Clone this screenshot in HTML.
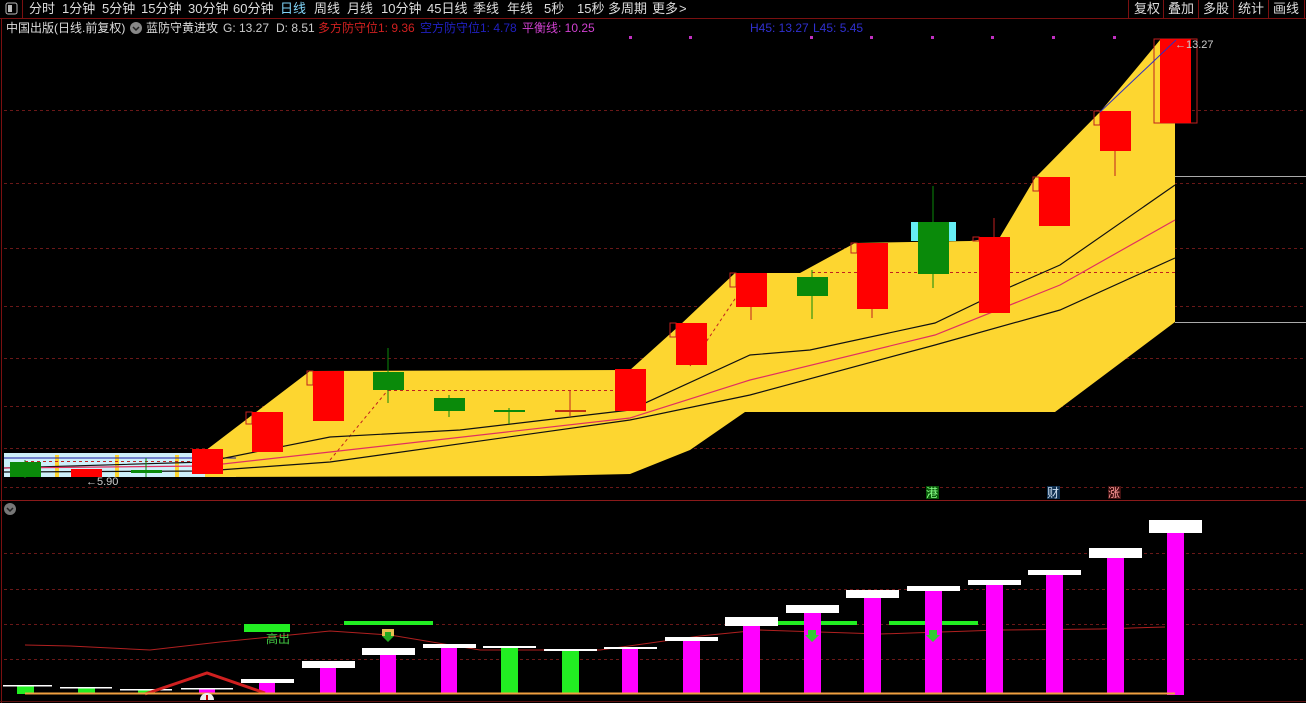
<!DOCTYPE html>
<html><head><meta charset="utf-8"><style>
html,body{margin:0;padding:0;background:#000;width:1306px;height:703px;overflow:hidden}
svg{display:block}
text{font-family:"Liberation Sans","Noto Sans CJK SC",sans-serif}
</style></head><body>
<svg width="1306" height="703" viewBox="0 0 1306 703" xmlns="http://www.w3.org/2000/svg">
<rect width="1306" height="703" fill="#000"/>
<!-- toolbar -->
<line x1="0" y1="18.5" x2="1306" y2="18.5" stroke="#7a1010"/>
<line x1="1.5" y1="18" x2="1.5" y2="703" stroke="#7a1010"/>
<rect x="6" y="3" width="11" height="11" rx="2" fill="none" stroke="#bbb"/>
<rect x="8" y="5" width="4" height="7" fill="#bbb"/>
<line x1="22.5" y1="0" x2="22.5" y2="18" stroke="#7a1010"/>
<g font-size="13" fill="#ddd">
<text x="29" y="13">分时</text><text x="62" y="13">1分钟</text><text x="102" y="13">5分钟</text>
<text x="141" y="13">15分钟</text><text x="188" y="13">30分钟</text><text x="233" y="13">60分钟</text>
<text x="280" y="13" fill="#7fd3f7">日线</text><text x="314" y="13">周线</text><text x="347" y="13">月线</text>
<text x="381" y="13">10分钟</text><text x="427" y="13">45日线</text><text x="473" y="13">季线</text>
<text x="507" y="13">年线</text><text x="544" y="13">5秒</text><text x="577" y="13">15秒</text>
<text x="608" y="13">多周期</text><text x="652" y="13">更多</text><text x="679" y="13">&gt;</text>
<text x="1134" y="13">复权</text><text x="1168" y="13">叠加</text><text x="1203" y="13">多股</text>
<text x="1238" y="13">统计</text><text x="1273" y="13">画线</text>
</g>
<g stroke="#7a1010"><line x1="1128.5" y1="0" x2="1128.5" y2="18"/><line x1="1163.5" y1="0" x2="1163.5" y2="18"/><line x1="1198.5" y1="0" x2="1198.5" y2="18"/><line x1="1233.5" y1="0" x2="1233.5" y2="18"/><line x1="1268.5" y1="0" x2="1268.5" y2="18"/><line x1="1304.5" y1="0" x2="1304.5" y2="18"/></g>
<!-- info line -->
<g font-size="12">
<text x="6" y="32" fill="#ddd">中国出版(日线.前复权)</text>
<circle cx="136" cy="28" r="6" fill="#888"/><path d="M133 27l3 3 3-3" stroke="#222" stroke-width="1.5" fill="none"/>
<text x="146" y="32" fill="#ddd">蓝防守黄进攻</text>
<text x="223" y="32" fill="#ccc">G: 13.27</text><text x="276" y="32" fill="#ccc">D: 8.51</text>
<text x="318" y="32" fill="#d02020">多方防守位1: 9.36</text>
<text x="420" y="32" fill="#2020c0">空方防守位1: 4.78</text>
<text x="522" y="32" fill="#d040d0">平衡线: 10.25</text>
<text x="750" y="32" fill="#3030d0">H45: 13.27</text><text x="813" y="32" fill="#3030d0">L45: 5.45</text>
</g>
<g fill="#c030c0"><rect x="629" y="36" width="3" height="3"/><rect x="689" y="36" width="3" height="3"/><rect x="810" y="36" width="3" height="3"/><rect x="870" y="36" width="3" height="3"/><rect x="931" y="36" width="3" height="3"/><rect x="991" y="36" width="3" height="3"/><rect x="1052" y="36" width="3" height="3"/><rect x="1113" y="36" width="3" height="3"/></g>
<!-- grid -->
<g stroke="#6a1818" stroke-dasharray="3,3">
<line x1="4" y1="110.5" x2="1306" y2="110.5"/><line x1="4" y1="183.5" x2="1306" y2="183.5"/>
<line x1="4" y1="248.5" x2="1306" y2="248.5"/><line x1="4" y1="306.5" x2="1306" y2="306.5"/>
<line x1="4" y1="358.5" x2="1306" y2="358.5"/><line x1="4" y1="406.5" x2="1306" y2="406.5"/>
<line x1="4" y1="448.5" x2="1306" y2="448.5"/><line x1="4" y1="487.5" x2="1306" y2="487.5"/>
<line x1="4" y1="553.5" x2="1306" y2="553.5"/><line x1="4" y1="589.5" x2="1306" y2="589.5"/>
<line x1="4" y1="624.5" x2="1306" y2="624.5"/><line x1="4" y1="659.5" x2="1306" y2="659.5"/>
</g>
<line x1="0" y1="500.5" x2="1306" y2="500.5" stroke="#8a1a1a"/>
<line x1="0" y1="701.5" x2="1306" y2="701.5" stroke="#5a1010"/>
<!-- yellow area -->
<rect x="4" y="453" width="232" height="24" fill="#cdf0fa"/>
<polygon points="205,451 310,371 630,370 680,325 735,273 800,273 855,243 970,241 1000,237 1035,178 1100,112 1160,40 1175,40 1175,322 1055,412 745,412 690,450 630,474 540,476 205,477" fill="#fdd630"/>
<g fill="#fdd630"><rect x="55" y="455" width="4" height="22"/><rect x="115" y="455" width="4" height="22"/><rect x="175" y="455" width="4" height="22"/></g>
<line x1="1175" y1="176.5" x2="1306" y2="176.5" stroke="#aaa"/>
<line x1="1175" y1="322.5" x2="1306" y2="322.5" stroke="#aaa"/>
<line x1="4" y1="458" x2="236" y2="458" stroke="#1a1aa0"/>
<line x1="25" y1="461.5" x2="205" y2="461.5" stroke="#c02020" stroke-dasharray="3,3"/>
<line x1="388" y1="390.5" x2="630" y2="390.5" stroke="#c02020" stroke-dasharray="3,3"/>
<line x1="812" y1="272.5" x2="1175" y2="272.5" stroke="#c02020" stroke-dasharray="3,3"/>
<path d="M330 460L388 390M690 366L751 275" stroke="#c02020" stroke-dasharray="3,3"/>
<!-- MA lines -->
<polyline points="4,468 205,462 330,437 460,430 630,410 750,355 810,350 935,323 1010,287 1060,265 1175,185" fill="none" stroke="#111" stroke-width="1.2"/>
<polyline points="4,468 205,466 330,452 630,418 750,380 935,335 1060,285 1175,220" fill="none" stroke="#e03060" stroke-width="1.2"/>
<polyline points="4,472 205,471 330,462 630,420 750,395 935,345 1060,310 1175,258" fill="none" stroke="#111" stroke-width="1.2"/>
<!-- candles -->
<g stroke-width="1">
<line x1="25" y1="460" x2="25" y2="478" stroke="#0a8a0a"/><rect x="10" y="462" width="31" height="15" fill="#0a8a0a"/>
<rect x="71" y="469" width="31" height="8" fill="#f00"/>
<line x1="146" y1="458" x2="146" y2="477" stroke="#0a8a0a"/><rect x="131" y="470" width="31" height="3" fill="#0a8a0a"/>
<rect x="192" y="449" width="31" height="25" fill="#f00"/>
<rect x="246" y="412" width="6" height="12" fill="none" stroke="#c02020"/><rect x="252" y="412" width="31" height="40" fill="#f00"/>
<rect x="307" y="371" width="6" height="14" fill="none" stroke="#c02020"/><rect x="313" y="371" width="31" height="50" fill="#f00"/>
<line x1="388" y1="348" x2="388" y2="403" stroke="#0a8a0a"/><rect x="373" y="372" width="31" height="18" fill="#0a8a0a"/>
<line x1="449" y1="395" x2="449" y2="417" stroke="#0a8a0a"/><rect x="434" y="398" width="31" height="13" fill="#0a8a0a"/>
<line x1="509" y1="408" x2="509" y2="424" stroke="#0a8a0a"/><rect x="494" y="410" width="31" height="2" fill="#0a8a0a"/>
<line x1="570" y1="390" x2="570" y2="416" stroke="#c02020"/><rect x="555" y="410" width="31" height="2" fill="#c03010"/>
<rect x="615" y="369" width="31" height="42" fill="#f00"/>
<rect x="670" y="323" width="6" height="14" fill="none" stroke="#c02020"/><rect x="676" y="323" width="31" height="42" fill="#f00"/>
<rect x="730" y="273" width="6" height="14" fill="none" stroke="#c02020"/><rect x="736" y="273" width="31" height="34" fill="#f00"/><line x1="751" y1="307" x2="751" y2="320" stroke="#c02020"/>
<line x1="812" y1="270" x2="812" y2="319" stroke="#0a8a0a"/><rect x="797" y="277" width="31" height="19" fill="#0a8a0a"/>
<rect x="851" y="243" width="6" height="10" fill="none" stroke="#c02020"/><rect x="857" y="243" width="31" height="66" fill="#f00"/><line x1="872" y1="309" x2="872" y2="318" stroke="#c02020"/>
<line x1="933" y1="186" x2="933" y2="288" stroke="#0a8a0a"/><rect x="911" y="222" width="45" height="19" fill="#66eef5"/><rect x="918" y="222" width="31" height="52" fill="#0a8a0a"/>
<line x1="994" y1="218" x2="994" y2="240" stroke="#c02020"/><rect x="973" y="237" width="6" height="4" fill="none" stroke="#c02020"/><rect x="979" y="237" width="31" height="76" fill="#f00"/>
<rect x="1033" y="177" width="6" height="14" fill="none" stroke="#c02020"/><rect x="1039" y="177" width="31" height="49" fill="#f00"/>
<line x1="1115" y1="151" x2="1115" y2="176" stroke="#c02020"/><rect x="1094" y="111" width="6" height="14" fill="none" stroke="#c02020"/><rect x="1100" y="111" width="31" height="40" fill="#f00"/>
<rect x="1154" y="39" width="43" height="84" fill="none" stroke="#c02020"/><rect x="1160" y="39" width="31" height="84" fill="#f00"/>
</g>
<line x1="1100" y1="112" x2="1176" y2="40" stroke="#3030c0"/>
<text x="1175" y="48" font-size="11" fill="#ccc">←13.27</text>
<text x="86" y="485" font-size="11" fill="#ccc">←5.90</text>
<!-- markers -->
<rect x="926" y="486" width="13" height="13" fill="#0a5a0a"/><text x="926" y="497" font-size="12" fill="#8f8">港</text>
<rect x="1047" y="486" width="13" height="13" fill="#103050"/><text x="1047" y="497" font-size="12" fill="#cde">财</text>
<rect x="1108" y="486" width="13" height="13" fill="#401010"/><text x="1108" y="497" font-size="12" fill="#f99">涨</text>
<!-- lower panel -->
<circle cx="10" cy="509" r="6" fill="#777"/><path d="M7 508l3 3 3-3" stroke="#222" stroke-width="1.5" fill="none"/>
<polyline points="25,645 70,646 150,650 220,642 330,631 390,635 480,650 600,650 700,636 760,630 880,634 1000,630 1100,629 1165,627" fill="none" stroke="#b02020" stroke-width="1"/>
<g fill="#22ee22"><rect x="244" y="624" width="46" height="8"/><rect x="344" y="621" width="89" height="4"/><rect x="768" y="621" width="89" height="4"/><rect x="889" y="621" width="89" height="4"/></g>
<text x="266" y="643" font-size="12" fill="#4c4">高出</text>
<!-- bars -->
<g fill="#ff00ff">
<rect x="199" y="688" width="16" height="5"/><rect x="259" y="683" width="16" height="10"/><rect x="320" y="668" width="16" height="25"/>
<rect x="380" y="655" width="16" height="38"/><rect x="441" y="648" width="16" height="45"/><rect x="622" y="649" width="16" height="44"/>
<rect x="683" y="640" width="17" height="53"/><rect x="743" y="626" width="17" height="67"/><rect x="804" y="613" width="17" height="80"/>
<rect x="864" y="598" width="17" height="95"/><rect x="925" y="591" width="17" height="102"/><rect x="986" y="585" width="17" height="108"/>
<rect x="1046" y="575" width="17" height="118"/><rect x="1107" y="558" width="17" height="135"/><rect x="1167" y="533" width="17" height="162"/>
</g>
<g fill="#22ee22">
<rect x="17" y="686" width="17" height="8"/><rect x="78" y="688" width="17" height="5"/><rect x="138" y="690" width="17" height="3"/>
<rect x="501" y="648" width="17" height="45"/><rect x="562" y="651" width="17" height="42"/>
</g>
<g fill="#fff">
<rect x="3" y="685" width="49" height="1.5"/><rect x="60" y="687" width="52" height="1.5"/><rect x="120" y="689" width="52" height="1.5"/>
<rect x="181" y="688" width="52" height="1.5"/><rect x="241" y="679" width="53" height="4"/><rect x="302" y="661" width="53" height="7"/>
<rect x="362" y="648" width="53" height="7"/><rect x="423" y="644" width="53" height="4"/><rect x="483" y="646" width="53" height="2"/>
<rect x="544" y="649" width="53" height="2"/><rect x="604" y="647" width="53" height="2"/><rect x="665" y="637" width="53" height="4"/>
<rect x="725" y="617" width="53" height="9"/><rect x="786" y="605" width="53" height="8"/><rect x="846" y="590" width="53" height="8"/>
<rect x="907" y="586" width="53" height="5"/><rect x="968" y="580" width="53" height="5"/><rect x="1028" y="570" width="53" height="5"/>
<rect x="1089" y="548" width="53" height="10"/><rect x="1149" y="520" width="53" height="13"/>
</g>
<polyline points="145,694 207,673 265,693" fill="none" stroke="#d02020" stroke-width="3"/>
<line x1="25" y1="693.5" x2="1175" y2="693.5" stroke="#f0a040" stroke-width="2"/>
<path d="M200 700a7 7 0 0 1 14 0z" fill="#eee"/><line x1="207" y1="695" x2="207" y2="700" stroke="#c00" stroke-width="2"/>
<g fill="#3c3"><path d="M808 630h8v5h3l-7 7-7-7h3z"/><path d="M929 630h8v5h3l-7 7-7-7h3z"/></g>
<path d="M382 629h12v7h-12z" fill="#e8c050"/><path d="M385 632h6v4h3l-6 6-6-6h3z" fill="#2a2"/>
</svg>
</body></html>
